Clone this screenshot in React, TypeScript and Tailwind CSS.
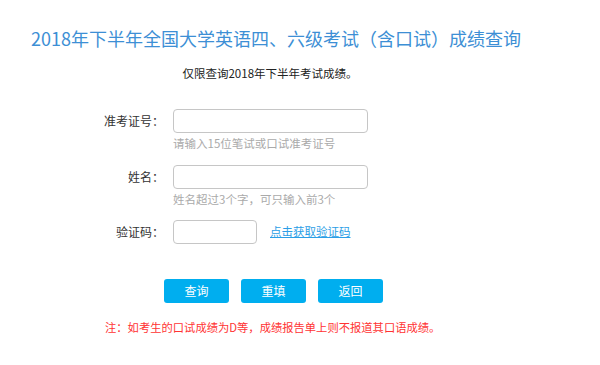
const font = "font-['Microsoft_YaHei','Noto_Sans_CJK_SC',sans-serif]";

function Field({ label, hint, width, extra }: { label: string; hint?: string; width: string; extra?: React.ReactNode }) {
  return (
    <div className="flex items-start">
      <div className="flex h-[24px] w-[70px] items-center justify-end pr-[9px] text-[12px] text-[#333]">{label}</div>
      <div className="flex flex-col">
        <div className="flex items-center">
          <input className={`${width} h-[24px] rounded-[4px] border border-[#c6c6c6] bg-white outline-none`} />
          {extra}
        </div>
        {hint && <div className="mt-[2px] text-[11.5px] leading-[16px] text-[#aaa]">{hint}</div>}
      </div>
    </div>
  );
}

export default function App() {
  return (
    <div className={`${font} h-[365px] w-[600px] bg-white`}>
      <div className="pl-[31px] pt-[26px] text-[18px] leading-[24px] text-[#3d8fd5]">
        2018年下半年全国大学英语四、六级考试（含口试）成绩查询
      </div>
      <div className="mt-[15px] w-[540px] text-center text-[11.5px] leading-[16px] text-[#222]">
        仅限查询2018年下半年考试成绩。
      </div>
      <div className="ml-[103px] mt-[28px] flex flex-col">
        <div className="h-[56px]">
          <Field label="准考证号：" hint="请输入15位笔试或口试准考证号" width="w-[195px]" />
        </div>
        <div className="h-[55px]">
          <Field label="姓名：" hint="姓名超过3个字，可只输入前3个" width="w-[195px]" />
        </div>
        <Field
          label="验证码："
          width="w-[84px]"
          extra={
            <a href="#" className="ml-[13px] text-[11.5px] text-[#2a9ee6] underline">
              点击获取验证码
            </a>
          }
        />
      </div>
      <div className="ml-[164px] mt-[35px] flex gap-[12px]">
        {['查询', '重填', '返回'].map((t) => (
          <button key={t} className="h-[24px] w-[65px] rounded-[3px] bg-[#00aeef] text-[12px] text-white">
            {t}
          </button>
        ))}
      </div>
      <div className="ml-[105px] mt-[16px] text-[11.3px] leading-[16px] text-[#ff3333]">
        注：如考生的口试成绩为D等，成绩报告单上则不报道其口语成绩。
      </div>
    </div>
  );
}
